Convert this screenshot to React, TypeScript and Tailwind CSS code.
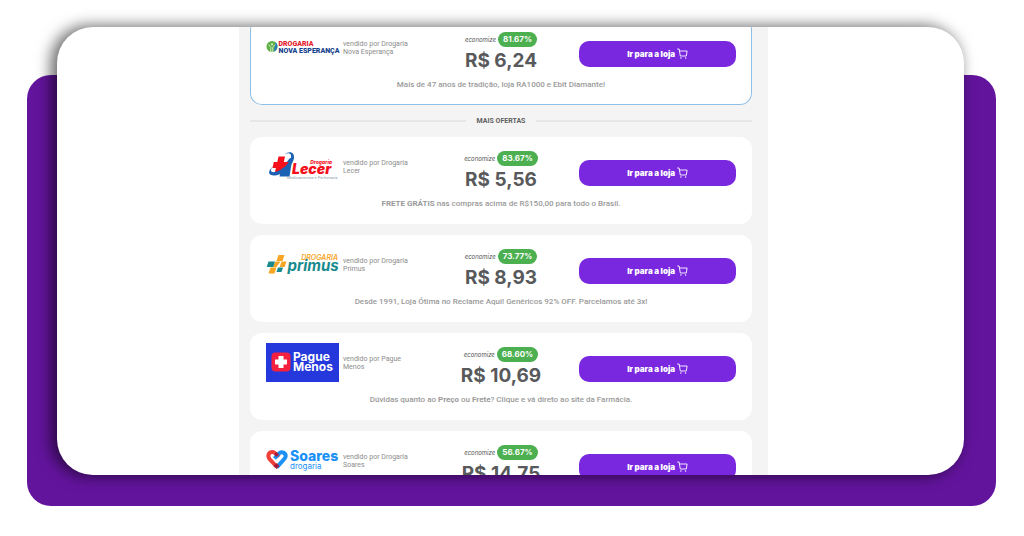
import type { ReactNode } from "react";

type Offer = {
  id: string;
  store: string;
  saving: string;
  price: string;
  note: ReactNode;
  logo: ReactNode;
};

const logoClass = "h-[39px] w-[73px] shrink-0 overflow-visible";

function NovaEsperancaLogo() {
  return (
    <svg viewBox="0 0 73 39" className={logoClass} role="img" aria-label="Drogaria Nova Esperança">
      <circle cx="6" cy="18.5" r="5.5" fill="#62b146" />
      <path d="M9.500 14.300a5.500 5.500 0 0 1-2 9.500l1-4.500z" fill="#2b7fb8" />
      <path d="M2.500 16.500l2.500 3-.5 4.300h2.500l-.3-4.300 2.500-3" fill="none" stroke="#d5ecc8" strokeWidth="0.900" />
      <circle cx="6" cy="16.300" r="1.100" fill="#d5ecc8" />
      <text x="12.500" y="18" fontSize="7" className="fill-[#e3202c] font-['Roboto',sans-serif] font-black">DROGARIA</text>
      <text x="12.500" y="24.500" fontSize="7" className="fill-[#17428c] font-['Roboto',sans-serif] font-black">NOVA ESPERANÇA</text>
    </svg>
  );
}

function LecerLogo() {
  return (
    <svg viewBox="0 0 73 39" className={logoClass} role="img" aria-label="Drogaria Lecer">
      <path d="M13.500 29.500l2-8 8-10 3-1-3 19z" fill="#1b62b5" />
      <path d="M12.500 9.500h6.500l-1.200 5.500h6.200l-1.400 6h-6.200l-1.200 5.500H8.700L9.900 21H6.500l1.300-6h3.500z" fill="#f5101c" />
      <path d="M18.500 7.500c3.500-2.500 7.500-1.500 6.500 3-1.500 6-9 13-16 14.500-4 .8-6-1.500-1.500-6-7 5.500-5 10 1.500 9.500 9-.8 18.500-11 19-18 .3-6-5.500-6.500-9.500-3z" fill="#1b62b5" />
      <text x="66" y="17" fontSize="5" textAnchor="end" className="fill-[#f5101c] font-['Inter',sans-serif] font-extrabold italic">Drogaria</text>
      <text x="26" y="27" fontSize="14" className="fill-[#f5101c] font-['Inter',sans-serif] font-black italic">Lecer</text>
      <text x="21" y="31.500" fontSize="4" className="fill-[#8e99a8] font-['Roboto',sans-serif]">Medicamentos e Perfumaria</text>
    </svg>
  );
}

function PrimusLogo() {
  return (
    <svg viewBox="0 0 73 39" className={logoClass} role="img" aria-label="Drogaria Primus">
      <path d="M12.500 10h6l-2 6h-6z" fill="#f6a623" />
      <path d="M4.500 22.500h6l-2 6h-6z" fill="#f6a623" />
      <path d="M9.500 16.500h5l-4 5.500h-4z" fill="#f6a623" />
      <path d="M2.500 16.500h6.500l-1.800 5.500H.7z" fill="#188a8d" />
      <path d="M15.500 16.500h5l-1.800 5.500h-5z" fill="#f6a623" />
      <path d="M12 22.500h5l-1.500 4.500h-5z" fill="#188a8d" />
      <text x="72" y="14.500" fontSize="7" textAnchor="end" className="fill-[#f6a623] font-['Inter',sans-serif] font-semibold italic">DROGARIA</text>
      <text x="21.500" y="25.500" fontSize="15" className="fill-[#188a8d] font-['Inter',sans-serif] font-bold italic">primus</text>
    </svg>
  );
}

function PagueMenosLogo() {
  return (
    <svg viewBox="0 0 73 39" className={logoClass} role="img" aria-label="Pague Menos">
      <rect width="73" height="39" fill="#2438dc" />
      <rect x="5.500" y="9.500" width="19" height="19" rx="4" fill="#f5203f" />
      <path d="M15 13v12M9 19h12" stroke="#fff" strokeWidth="5" strokeLinejoin="round" />
      <text x="27" y="18" fontSize="12" className="fill-white font-['Inter',sans-serif] font-bold">Pague</text>
      <text x="27" y="27.500" fontSize="12" className="fill-white font-['Inter',sans-serif] font-bold">Menos</text>
    </svg>
  );
}

function SoaresLogo() {
  return (
    <svg viewBox="0 0 73 39" className={logoClass} role="img" aria-label="Soares drogaria">
      <path d="M10.500 25.500L3.500 18C1 14.500 3 11 6.500 11c2 0 3 1 6.500 5" fill="none" stroke="#ee3f3a" strokeWidth="4" />
      <path d="M8.500 17.500l4-4.500c3-3.500 8-1 7 3-.4 1.500-1.500 2.500-9 10.500" fill="none" stroke="#1b91f5" strokeWidth="4" />
      <path d="M7.500 25l3-3 3 3-3 3z" fill="#a51d3b" />
      <path d="M8 13.500l2.500-2.500 2.500 2.500-2.500 2.500z" fill="#a51d3b" />
      <text x="24" y="19.500" fontSize="14" className="fill-[#1b91f5] font-['Inter',sans-serif] font-extrabold">Soares</text>
      <text x="24" y="27.500" fontSize="8" className="fill-[#1b91f5] font-['Inter',sans-serif]">drogaria</text>
    </svg>
  );
}

function CartIcon() {
  return (
    <svg viewBox="0 0 11 11" className="h-[11px] w-[11px]" fill="none" stroke="currentColor" strokeWidth="0.9" strokeLinecap="round" strokeLinejoin="round" aria-hidden="true">
      <path d="M.6 1h1.500l1.200 7h6l.8-5H2.500" />
      <circle cx="3.900" cy="10" r=".7" fill="currentColor" stroke="none" />
      <circle cx="8.600" cy="10" r=".7" fill="currentColor" stroke="none" />
    </svg>
  );
}

const featured: Offer = {
  id: "nova",
  store: "Drogaria Nova Esperança",
  saving: "81.67%",
  price: "R$ 6,24",
  note: "Mais de 47 anos de tradição, loja RA1000 e Ebit Diamante!",
  logo: <NovaEsperancaLogo />,
};

const offers: Offer[] = [
  {
    id: "lecer",
    store: "Drogaria Lecer",
    saving: "83.67%",
    price: "R$ 5,56",
    note: (
      <>
        <b className="font-bold">FRETE GRÁTIS</b> nas compras acima de R$150,00 para todo o Brasil.
      </>
    ),
    logo: <LecerLogo />,
  },
  {
    id: "primus",
    store: "Drogaria Primus",
    saving: "73.77%",
    price: "R$ 8,93",
    note: "Desde 1991, Loja Ótima no Reclame Aqui! Genéricos 92% OFF. Parcelamos até 3x!",
    logo: <PrimusLogo />,
  },
  {
    id: "pague",
    store: "Pague Menos",
    saving: "68.60%",
    price: "R$ 10,69",
    note: (
      <>
        Dúvidas quanto ao <b className="font-bold">Preço</b> ou <b className="font-bold">Frete</b>? Clique e vá direto ao site da Farmácia.
      </>
    ),
    logo: <PagueMenosLogo />,
  },
  {
    id: "soares",
    store: "Drogaria Soares",
    saving: "56.67%",
    price: "R$ 14,75",
    note: null,
    logo: <SoaresLogo />,
  },
];

function OfferCard({ offer, highlighted = false }: { offer: Offer; highlighted?: boolean }) {
  return (
    <article
      className={`rounded-xl bg-white px-4 pt-[10px] pb-[14px] ${highlighted ? "ring-1 ring-[#8fbfe6] ring-inset" : ""}`}
    >
      <div className="grid grid-cols-3 items-center">
        <div className="flex items-center gap-1 pb-3">
          {offer.logo}
          <p className="w-[70px] pt-px text-[7px] leading-[8px] text-[#8c8c8c]">vendido por {offer.store}</p>
        </div>
        <div className="flex flex-col items-center">
          <div className="flex items-center gap-[2px] font-['Inter',sans-serif]">
            <span className="text-[6px] leading-[8px] text-[#555] italic">economize</span>
            <span className="rounded-full bg-[#4caf50] px-[5px] text-[8px] leading-[15px] font-bold text-white">
              {offer.saving}
            </span>
          </div>
          <strong className="font-['Inter',sans-serif] text-[19px] leading-[28px] font-bold whitespace-nowrap text-[#58595b]">
            {offer.price}
          </strong>
        </div>
        <button
          type="button"
          className="flex h-[26px] items-center justify-center gap-[2px] rounded-[10px] bg-[#7a28e0] font-['Inter',sans-serif] text-[8px] font-black text-white"
        >
          Ir para a loja
          <CartIcon />
        </button>
      </div>
      <p className="min-h-3 text-center text-[8px] leading-[12px] font-medium text-[#9a9a9a]">{offer.note}</p>
    </article>
  );
}

export default function App() {
  return (
    <div className="grid h-screen grid-cols-1 grid-rows-1 overflow-hidden bg-white font-['Roboto',sans-serif]">
      <div className="col-start-1 row-start-1 mt-[75px] mr-[28px] mb-[30px] ml-[27px] rounded-3xl bg-[#63149d]" />
      <main className="col-start-1 row-start-1 mt-[27px] mr-[60px] mb-[61px] ml-[57px] flex min-h-0 items-start justify-center overflow-hidden rounded-[36px] bg-white pr-[14px] shadow-[-5px_0_15px_1px_rgba(0,0,0,0.6)]">
        <div className="-mt-[9px] w-full max-w-[529px] bg-[#f4f4f4] pr-4 pb-4 pl-[11px]">
          <OfferCard offer={featured} highlighted />
          <div className="flex h-8 items-center gap-[11px]">
            <span className="h-[2px] flex-1 bg-[#e6e6e6]" />
            <h2 className="text-[7px] font-bold text-[#606060]">MAIS OFERTAS</h2>
            <span className="h-[2px] flex-1 bg-[#e6e6e6]" />
          </div>
          <div className="flex flex-col gap-[11px]">
            {offers.map((offer) => (
              <OfferCard key={offer.id} offer={offer} />
            ))}
          </div>
        </div>
      </main>
    </div>
  );
}
